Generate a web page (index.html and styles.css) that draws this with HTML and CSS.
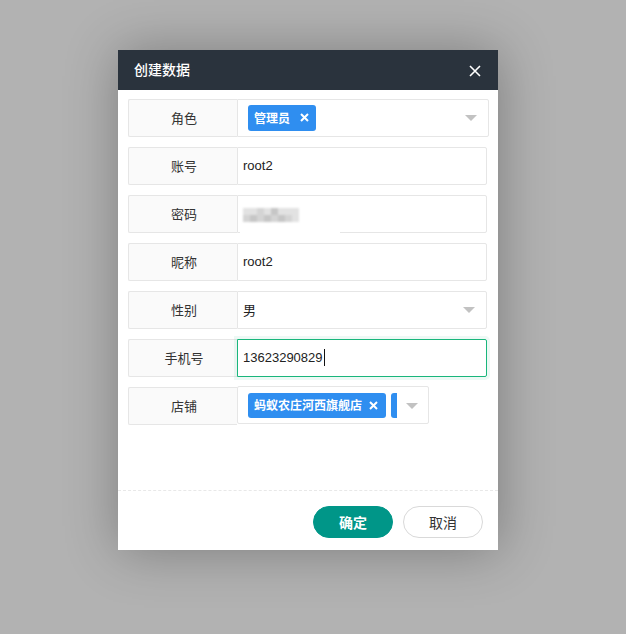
FILE: index.html
```html
<!DOCTYPE html>
<html lang="zh">
<head>
<meta charset="utf-8">
<title>创建数据</title>
<link rel="stylesheet" href="styles.css">
</head>
<body>
<div class="dialog">
  <div class="dlg-head">
    <span class="dlg-title">创建数据</span>
    <svg class="dlg-close" width="12" height="12" viewBox="0 0 12 12"><path d="M1 1L11 11M11 1L1 11" stroke="#fff" stroke-width="1.6" fill="none"/></svg>
  </div>
  <div class="dlg-body">
    <div class="row">
      <div class="label">角色</div>
      <div class="field select wide">
        <span class="tag">管理员<svg class="tag-x" width="9" height="9" viewBox="0 0 9 9"><path d="M1 1L8 8M8 1L1 8" stroke="#fff" stroke-width="2" fill="none"/></svg></span>
        <span class="arrow"></span>
      </div>
    </div>
    <div class="row">
      <div class="label">账号</div>
      <div class="field"><span class="val">root2</span></div>
    </div>
    <div class="row">
      <div class="label">密码</div>
      <div class="field pwd">
        <div class="mosaic">
          <i class="a"></i><i class="a"></i><i class="b"></i><i class="a"></i><i class="c"></i><i class="a"></i><i class="a"></i><i class="a"></i>
          <i class="b"></i><i class="c"></i><i class="b"></i><i class="c"></i><i class="b"></i><i class="c"></i><i class="b"></i><i class="a"></i>
        </div>
        <div class="pwd-cover"></div>
      </div>
    </div>
    <div class="row">
      <div class="label">昵称</div>
      <div class="field"><span class="val">root2</span></div>
    </div>
    <div class="row">
      <div class="label">性别</div>
      <div class="field select"><span class="val cjk">男</span><span class="arrow"></span></div>
    </div>
    <div class="row">
      <div class="label">手机号</div>
      <div class="field focus"><span class="val">13623290829</span><span class="caret"></span></div>
    </div>
    <div class="row">
      <div class="label">店铺</div>
      <div class="field multi">
        <div class="tags">
          <span class="tag">蚂蚁农庄河西旗舰店<svg class="tag-x" width="9" height="9" viewBox="0 0 9 9"><path d="M1 1L8 8M8 1L1 8" stroke="#fff" stroke-width="2" fill="none"/></svg></span>
          <span class="tag">河南店</span>
        </div>
        <span class="arrow"></span>
      </div>
    </div>
  </div>
  <div class="dlg-foot">
    <button class="btn primary">确定</button>
    <button class="btn">取消</button>
  </div>
</div>
</body>
</html>
```
FILE: styles.css
```css
html, body {
  margin: 0;
  padding: 0;
}
body {
  width: 626px;
  height: 634px;
  background: #b2b2b2;
  font-family: "Liberation Sans", "Noto Sans CJK SC", sans-serif;
  overflow: hidden;
}
.dialog {
  margin: 50px 0 0 118px;
  width: 380px;
  height: 500px;
  background: #fff;
  box-shadow: 1px 1px 50px rgba(0,0,0,0.3);
  display: flex;
  flex-direction: column;
}
.dlg-head {
  height: 40px;
  background: #2a333d;
  display: flex;
  align-items: center;
  justify-content: space-between;
  padding: 0 17px 0 16px;
}
.dlg-title {
  color: #fff;
  font-size: 14px;
  font-weight: 500;
  font-family: "Noto Sans CJK SC", sans-serif;
  line-height: 1;
  position: relative;
  top: -1px;
}
.dlg-close {
  display: block;
  position: relative;
  top: 1px;
}
.dlg-body {
  height: 400px;
  padding: 9px 0 0 10px;
  box-sizing: border-box;
  display: flex;
  flex-direction: column;
  gap: 10px;
}
.row {
  display: flex;
  height: 38px;
}
.label {
  width: 109px;
  height: 38px;
  box-sizing: border-box;
  border: 1px solid #e6e6e6;
  border-right: none;
  border-radius: 2px 0 0 2px;
  background: #fafafa;
  display: flex;
  align-items: center;
  justify-content: center;
  font-family: "Noto Sans CJK SC", sans-serif;
  font-size: 13px;
  line-height: 1;
  color: #333;
  padding: 0 0 2px 2px;
}
.field {
  position: relative;
  width: 250px;
  height: 38px;
  box-sizing: border-box;
  border: 1px solid #e6e6e6;
  border-radius: 0 2px 2px 0;
  display: flex;
  align-items: center;
  padding-left: 5px;
  font-size: 13px;
  color: #222;
  font-family: "Liberation Sans", "Noto Sans CJK SC", sans-serif;
}
.val {
  position: relative;
  top: -1px;
  line-height: 1;
}
.val.cjk {
  font-family: "Noto Sans CJK SC", sans-serif;
}
.field.wide {
  width: 252px;
}
.arrow {
  position: absolute;
  right: 11px;
  top: 15px;
  width: 0;
  height: 0;
  border-left: 6px solid transparent;
  border-right: 6px solid transparent;
  border-top: 6px solid #c2c2c2;
}
.tag {
  display: inline-flex;
  align-items: center;
  height: 26px;
  padding: 0 7px 0 6px;
  background: #2f8ef0;
  color: #fff;
  border-radius: 3px;
  font-family: "Noto Sans CJK SC", sans-serif;
  font-weight: 700;
  font-size: 12px;
  line-height: 1;
  white-space: nowrap;
  flex-shrink: 0;
  box-sizing: border-box;
}
.tag-x {
  display: block;
  margin-left: 10px;
}
.select .tag {
  margin-left: 5px;
  margin-top: -1px;
}
.mosaic {
  display: grid;
  grid-template-columns: repeat(8, 7px);
  grid-template-rows: 7px 7px;
  margin-top: 1px;
  filter: blur(0.8px);
}
.mosaic i {
  display: block;
}
.mosaic .a { background: #e2e2e2; }
.mosaic .b { background: #d4d4d4; }
.mosaic .c { background: #c6c6c6; }
.pwd-cover {
  position: absolute;
  left: 2px;
  bottom: -1px;
  width: 100px;
  height: 3px;
  background: #fff;
}
.focus {
  border-color: #19b67c;
  box-shadow: 0 0 0 3px rgba(25, 182, 124, 0.08);
}
.caret {
  display: inline-block;
  width: 1px;
  height: 17px;
  background: #111;
  margin-left: 1px;
  position: relative;
  top: -1px;
}
.multi {
  width: 192px;
  margin-top: -1px;
  padding-left: 10px;
  border-radius: 2px;
}
.multi .tags {
  display: flex;
  gap: 5px;
  width: 149px;
  overflow: hidden;
}
.multi .tag {
  width: 138px;
  height: 25px;
  padding: 0 6px 0 6px;
  justify-content: space-between;
}
.multi .tags .tag + .tag {
  width: auto;
}
.multi .tag-x {
  margin-left: 0;
  margin-right: 2px;
}
.multi .arrow {
  right: 10px;
  top: 16px;
}
.dlg-foot {
  border-top: 1px dashed #e8e8e8;
  flex: 1;
  display: flex;
  justify-content: flex-end;
  align-items: flex-start;
  gap: 10px;
  padding: 15px 15px 0 0;
}
.btn {
  width: 80px;
  height: 32px;
  border-radius: 16px;
  border: 1px solid #d9d9d9;
  background: #fff;
  color: #333;
  font-family: "Noto Sans CJK SC", sans-serif;
  font-size: 14px;
  padding: 0;
}
.btn.primary {
  background: #009688;
  border-color: #009688;
  color: #fff;
  font-weight: 700;
}
```
